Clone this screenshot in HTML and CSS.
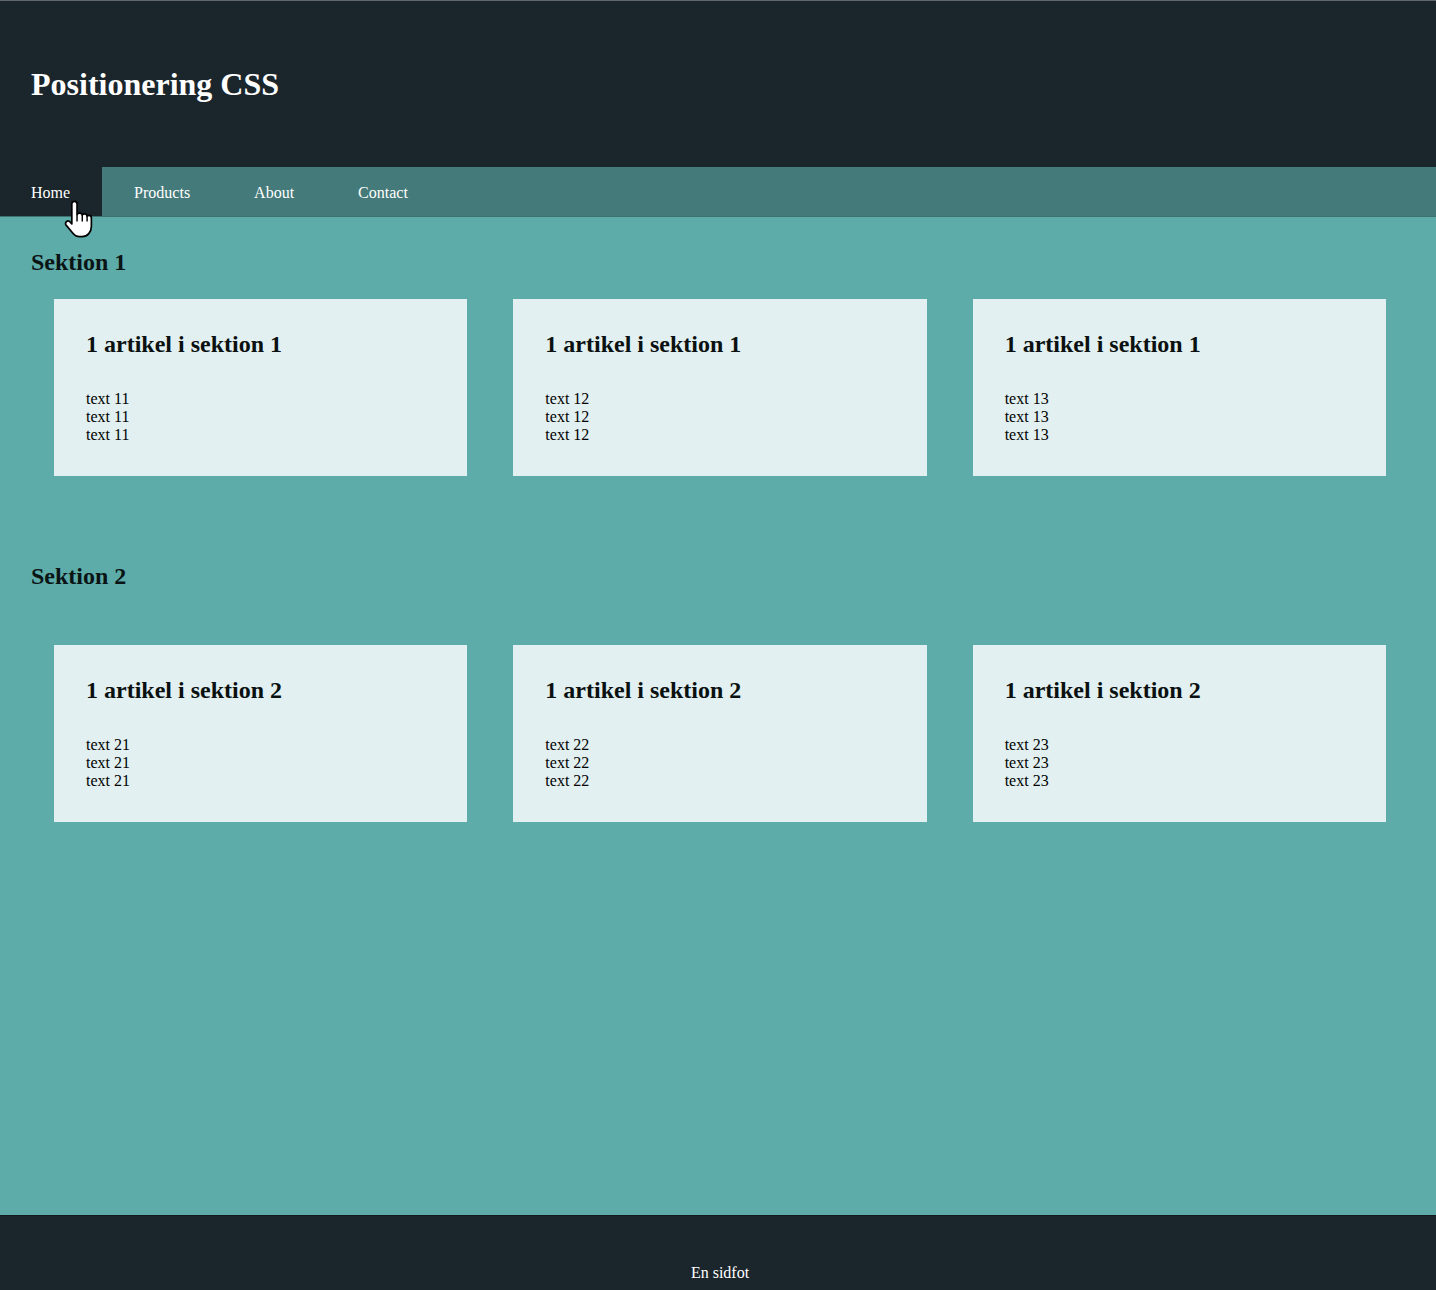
FILE: index.html
```html
<!DOCTYPE html>
<html lang="sv">
<head>
<meta charset="utf-8">
<title>Positionering CSS</title>
<link rel="stylesheet" href="styles.css">
</head>
<body>
<header class="site-header">
  <h1 class="site-title">Positionering CSS</h1>
</header>
<nav class="main-nav">
  <a class="nav-link active" href="#">Home</a>
  <a class="nav-link" href="#">Products</a>
  <a class="nav-link" href="#">About</a>
  <a class="nav-link" href="#">Contact</a>
</nav>
<main class="content">
  <section class="section section-1">
    <h2 class="section-title">Sektion 1</h2>
    <div class="cards">
      <article class="card"><h3 class="card-title">1 artikel i sektion 1</h3><p class="card-text">text 11<br>text 11<br>text 11</p></article>
      <article class="card"><h3 class="card-title">1 artikel i sektion 1</h3><p class="card-text">text 12<br>text 12<br>text 12</p></article>
      <article class="card"><h3 class="card-title">1 artikel i sektion 1</h3><p class="card-text">text 13<br>text 13<br>text 13</p></article>
    </div>
  </section>
  <section class="section section-2">
    <h2 class="section-title">Sektion 2</h2>
    <div class="cards">
      <article class="card"><h3 class="card-title">1 artikel i sektion 2</h3><p class="card-text">text 21<br>text 21<br>text 21</p></article>
      <article class="card"><h3 class="card-title">1 artikel i sektion 2</h3><p class="card-text">text 22<br>text 22<br>text 22</p></article>
      <article class="card"><h3 class="card-title">1 artikel i sektion 2</h3><p class="card-text">text 23<br>text 23<br>text 23</p></article>
    </div>
  </section>
</main>
<footer class="site-footer">En sidfot</footer>
<svg class="cursor" width="30" height="38" viewBox="0 0 23 29" xmlns="http://www.w3.org/2000/svg">
  <path d="M8 1 C9.1 1 10 1.9 10 3 V11 C10.5 10.4 11.3 10 12 10 C13 10 13.7 10.6 14 11.4 C14.4 10.9 15 10.6 15.7 10.6 C16.7 10.6 17.5 11.3 17.7 12.2 C18.1 11.9 18.6 11.7 19.1 11.7 C20.2 11.7 21 12.6 21 13.7 V20 C21 24.5 18 28 14 28 H12 C9.5 28 7.8 26.8 6.5 25 L1.6 19.2 C0.9 18.3 1.1 17 2 16.4 C2.9 15.8 4.1 16 4.8 16.9 L6 18.3 V3 C6 1.9 6.9 1 8 1 Z" fill="#fff" stroke="#000" stroke-width="1.3" stroke-linejoin="round"/>
  <path d="M10 11 V16.5 M14 11.4 V16.5 M17.7 12.2 V16.5" stroke="#000" stroke-width="1.1" fill="none"/>
</svg>
</body>
</html>
```
FILE: styles.css
```css
html, body {
  margin: 0;
  padding: 0;
}
body {
  font-family: "Liberation Serif", "Times New Roman", serif;
  font-size: 16px;
  background: #5dacaa;
  color: #000;
  min-height: 100vh;
  display: flex;
  flex-direction: column;
  position: relative;
}
.site-header {
  background: #1b252c;
  border-top: 1px solid #60666a;
  padding: 65px 31px 64px;
}
.site-title {
  margin: 0;
  font-size: 32px;
  line-height: 37px;
  font-weight: bold;
  color: #fff;
}
.main-nav {
  display: flex;
  background: #447a79;
  height: 49px;
  border-bottom: 1px solid #3f716f;
}
.nav-link {
  display: block;
  padding: 2px 32px 0;
  line-height: 47px;
  color: #fff;
  text-decoration: none;
  font-size: 16px;
}
.nav-link.active {
  background: #1b252c;
  padding-left: 31px;
}
.content {
  flex: 1;
}
.section-title {
  margin: 0;
  padding-left: 31px;
  font-size: 24px;
  line-height: 27.6px;
  font-weight: bold;
  color: #0b1414;
}
.section-1 {
  padding-top: 32px;
}
.section-1 .section-title {
  margin-bottom: 22px;
}
.section-2 {
  padding-top: 87px;
}
.section-2 .section-title {
  margin-bottom: 54px;
}
.cards {
  display: grid;
  grid-template-columns: repeat(3, 1fr);
  column-gap: 46px;
  padding: 0 50px 0 54px;
}
.card {
  background: #e2f0f1;
  padding: 32px 32px 32px;
}
.card-title {
  margin: 0 0 32px;
  font-size: 24px;
  line-height: 27.6px;
  font-weight: bold;
  color: #0b1010;
}
.card-text {
  margin: 0;
  font-size: 16px;
  line-height: 18px;
}
.site-footer {
  background: #1b252c;
  border-top: 1px solid #141b20;
  color: #fff;
  text-align: center;
  padding: 48px 0 8px 4px;
  line-height: 18px;
  font-size: 16px;
}
.cursor {
  position: absolute;
  left: 64px;
  top: 200px;
}
```
